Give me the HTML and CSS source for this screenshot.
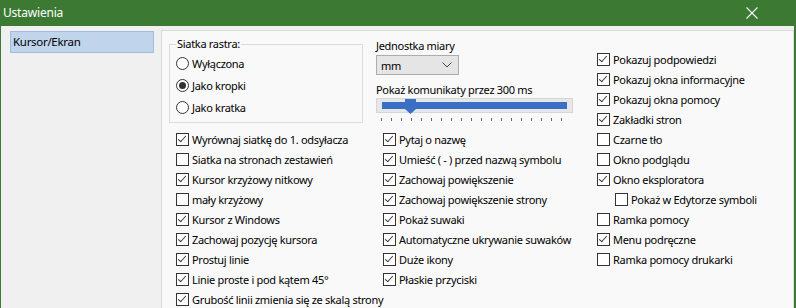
FILE: index.html
```html
<!DOCTYPE html>
<html lang="pl">
<head>
  <meta charset="UTF-8">
  <title>Ustawienia</title>
  <link rel="stylesheet" href="styles.css">
</head>
<body>
  <div class="window">
    <div class="titlebar">
      <span class="title">Ustawienia</span>
      <svg class="close" width="12" height="12" viewBox="0 0 12 12">
        <path d="M0.5 0.5 L11.5 11.5 M11.5 0.5 L0.5 11.5" stroke="#fff" stroke-width="1.1" fill="none"/>
      </svg>
    </div>

    <div class="content">
      <div class="sidebar">
        <div class="nav-item active">Kursor/Ekran</div>
      </div>

      <div class="panel">
        <div class="grid">
          <fieldset class="group">
            <legend>Siatka rastra:</legend>
            <label class="radio"><span class="dot"></span>Wyłączona</label>
            <label class="radio"><span class="dot on"></span>Jako kropki</label>
            <label class="radio"><span class="dot"></span>Jako kratka</label>
          </fieldset>

          <div class="units">
            <div class="caption">Jednostka miary</div>
            <div class="select">
              <span>mm</span>
              <svg width="10" height="6" viewBox="0 0 10 6"><path d="M0.5 0.5 L5 5 L9.5 0.5" stroke="#444" fill="none"/></svg>
            </div>
            <div class="caption second">Pokaż komunikaty przez 300 ms</div>
            <div class="slider">
              <div class="track"></div>
              <svg class="thumb" width="11" height="15" viewBox="0 0 11 15" style="left: 28px">
                <polygon points="0,0 11,0 11,10 5.5,15 0,10" fill="#3b6fc6"/>
              </svg>
            </div>
            <div class="ticks"></div>
          </div>

          <ul class="checks col3">
            <li class="on">Pokazuj podpowiedzi</li>
            <li class="on">Pokazuj okna informacyjne</li>
            <li class="on">Pokazuj okna pomocy</li>
            <li class="on">Zakładki stron</li>
            <li>Czarne tło</li>
            <li>Okno podglądu</li>
            <li class="on">Okno eksploratora</li>
            <li class="sub">Pokaż w Edytorze symboli</li>
            <li>Ramka pomocy</li>
            <li class="on">Menu podręczne</li>
            <li>Ramka pomocy drukarki</li>
          </ul>

          <ul class="checks col1">
            <li class="on">Wyrównaj siatkę do 1. odsyłacza</li>
            <li>Siatka na stronach zestawień</li>
            <li class="on">Kursor krzyżowy nitkowy</li>
            <li>mały krzyżowy</li>
            <li class="on">Kursor z Windows</li>
            <li class="on">Zachowaj pozycję kursora</li>
            <li class="on">Prostuj linie</li>
            <li class="on">Linie proste i pod kątem 45°</li>
            <li class="on">Grubość linii zmienia się ze skalą strony</li>
          </ul>

          <ul class="checks col2">
            <li class="on">Pytaj o nazwę</li>
            <li class="on">Umieść ( - ) przed nazwą symbolu</li>
            <li class="on">Zachowaj powiększenie</li>
            <li class="on">Zachowaj powiększenie strony</li>
            <li class="on">Pokaż suwaki</li>
            <li class="on">Automatyczne ukrywanie suwaków</li>
            <li class="on">Duże ikony</li>
            <li class="on">Płaskie przyciski</li>
          </ul>
        </div>
      </div>
    </div>
  </div>
</body>
</html>
```

FILE: styles.css
```css
html, body {
  margin: 0;
  padding: 0;
}
body {
  font-family: "Noto Sans", "Open Sans", sans-serif;
  font-size: 11px;
  letter-spacing: -0.3px;
  color: #000;
  background-color: #f0f0f0;
  width: 796px;
  height: 308px;
  overflow: hidden;
}
.window {
  height: 308px;
  display: flex;
  flex-direction: column;
  border-left: 1px solid #3c7a34;
  border-right: 2px solid #3c7a34;
}
.titlebar {
  height: 26px;
  flex: none;
  background-color: #3c7a34;
  color: #fff;
  display: flex;
  align-items: center;
  justify-content: space-between;
  padding: 0 38px 0 3px;
  margin-left: -1px;
  margin-right: -2px;
}
.title {
  font-size: 12px;
  letter-spacing: -0.2px;
  line-height: 26px;
}
.content {
  flex: 1;
  display: flex;
  min-height: 0;
}
.sidebar {
  width: 160px;
  flex: none;
}
.nav-item {
  margin: 5px 0 0 9px;
  width: 144px;
  height: 22px;
  box-sizing: border-box;
  padding-left: 2px;
  line-height: 20px;
  font-size: 11.5px;
}
.nav-item.active {
  background-color: #c0d4ec;
  border: 1px solid #a3bbdd;
}
.panel {
  flex: 1;
  margin-top: 4px;
  background-color: #f9f9f9;
  border: 1px solid #dadada;
  border-bottom: none;
  padding-left: 7px;
}
.grid {
  display: grid;
  grid-template-columns: 207px 221px 1fr;
  grid-template-rows: 98px auto;
}

/* group box */
.group {
  grid-column: 1;
  grid-row: 1;
  margin: 5px 0 0 0;
  padding: 0 0 0 6px;
  width: 194px;
  height: 87px;
  box-sizing: border-box;
  border: 1px solid #dcdcdc;
  min-inline-size: 0;
}
.group legend {
  padding: 0 1px;
  line-height: 16px;
}
.radio {
  display: flex;
  align-items: center;
  height: 22px;
  gap: 3px;
  white-space: nowrap;
}
.dot {
  width: 13px;
  height: 13px;
  box-sizing: border-box;
  border: 1px solid #333;
  border-radius: 50%;
  background-color: #fff;
  display: flex;
  align-items: center;
  justify-content: center;
}
.dot.on::after {
  content: "";
  width: 7px;
  height: 7px;
  border-radius: 50%;
  background-color: #333;
}

/* units + slider */
.units {
  grid-column: 2;
  grid-row: 1;
  padding-top: 7px;
}
.caption {
  line-height: 16px;
  white-space: nowrap;
}
.caption.second {
  margin-top: 7px;
}
.select {
  margin-top: 1px;
  width: 83px;
  height: 20px;
  box-sizing: border-box;
  background-color: #e5e5e5;
  border: 1px solid #adadad;
  display: flex;
  align-items: center;
  justify-content: space-between;
  padding: 0 6px 0 4px;
}
.slider {
  position: relative;
  width: 197px;
  height: 15px;
  box-sizing: border-box;
  background-color: #e7e7e7;
  border: 1px solid #d6d6d6;
  padding: 3px 5px 3px 5px;
}
.track {
  height: 7px;
  background-color: #3b6fc6;
}
.thumb {
  position: absolute;
  top: 0;
}
.ticks {
  margin: 5px 0 0 5px;
  width: 190px;
  height: 3px;
  background-image: repeating-linear-gradient(to right, #666 0, #666 1px, transparent 1px, transparent 10px);
}

/* check lists */
.checks {
  list-style: none;
  margin: 0;
  padding: 0;
}
.checks li {
  display: flex;
  align-items: center;
  height: 20px;
  gap: 3px;
  white-space: nowrap;
}
.checks li::before {
  content: "";
  width: 13px;
  height: 13px;
  flex: none;
  box-sizing: border-box;
  border: 1px solid #333;
  background-color: #fff;
}
.checks li.on {
  position: relative;
}
.checks li.on::after {
  content: "";
  position: absolute;
  left: 4px;
  top: 5px;
  width: 3px;
  height: 7px;
  border-right: 1px solid #333;
  border-bottom: 1px solid #333;
  transform: rotate(42deg);
}
.checks li.sub {
  padding-left: 18px;
}
.checks li.sub.on::after {
  left: 22px;
}
.col1 {
  grid-column: 1;
  grid-row: 2;
  padding-left: 7px;
}
.col2 {
  grid-column: 2;
  grid-row: 2;
  padding-left: 7px;
}
.col3 {
  grid-column: 3;
  grid-row: 1 / span 2;
  margin-top: 18px;
}
```
